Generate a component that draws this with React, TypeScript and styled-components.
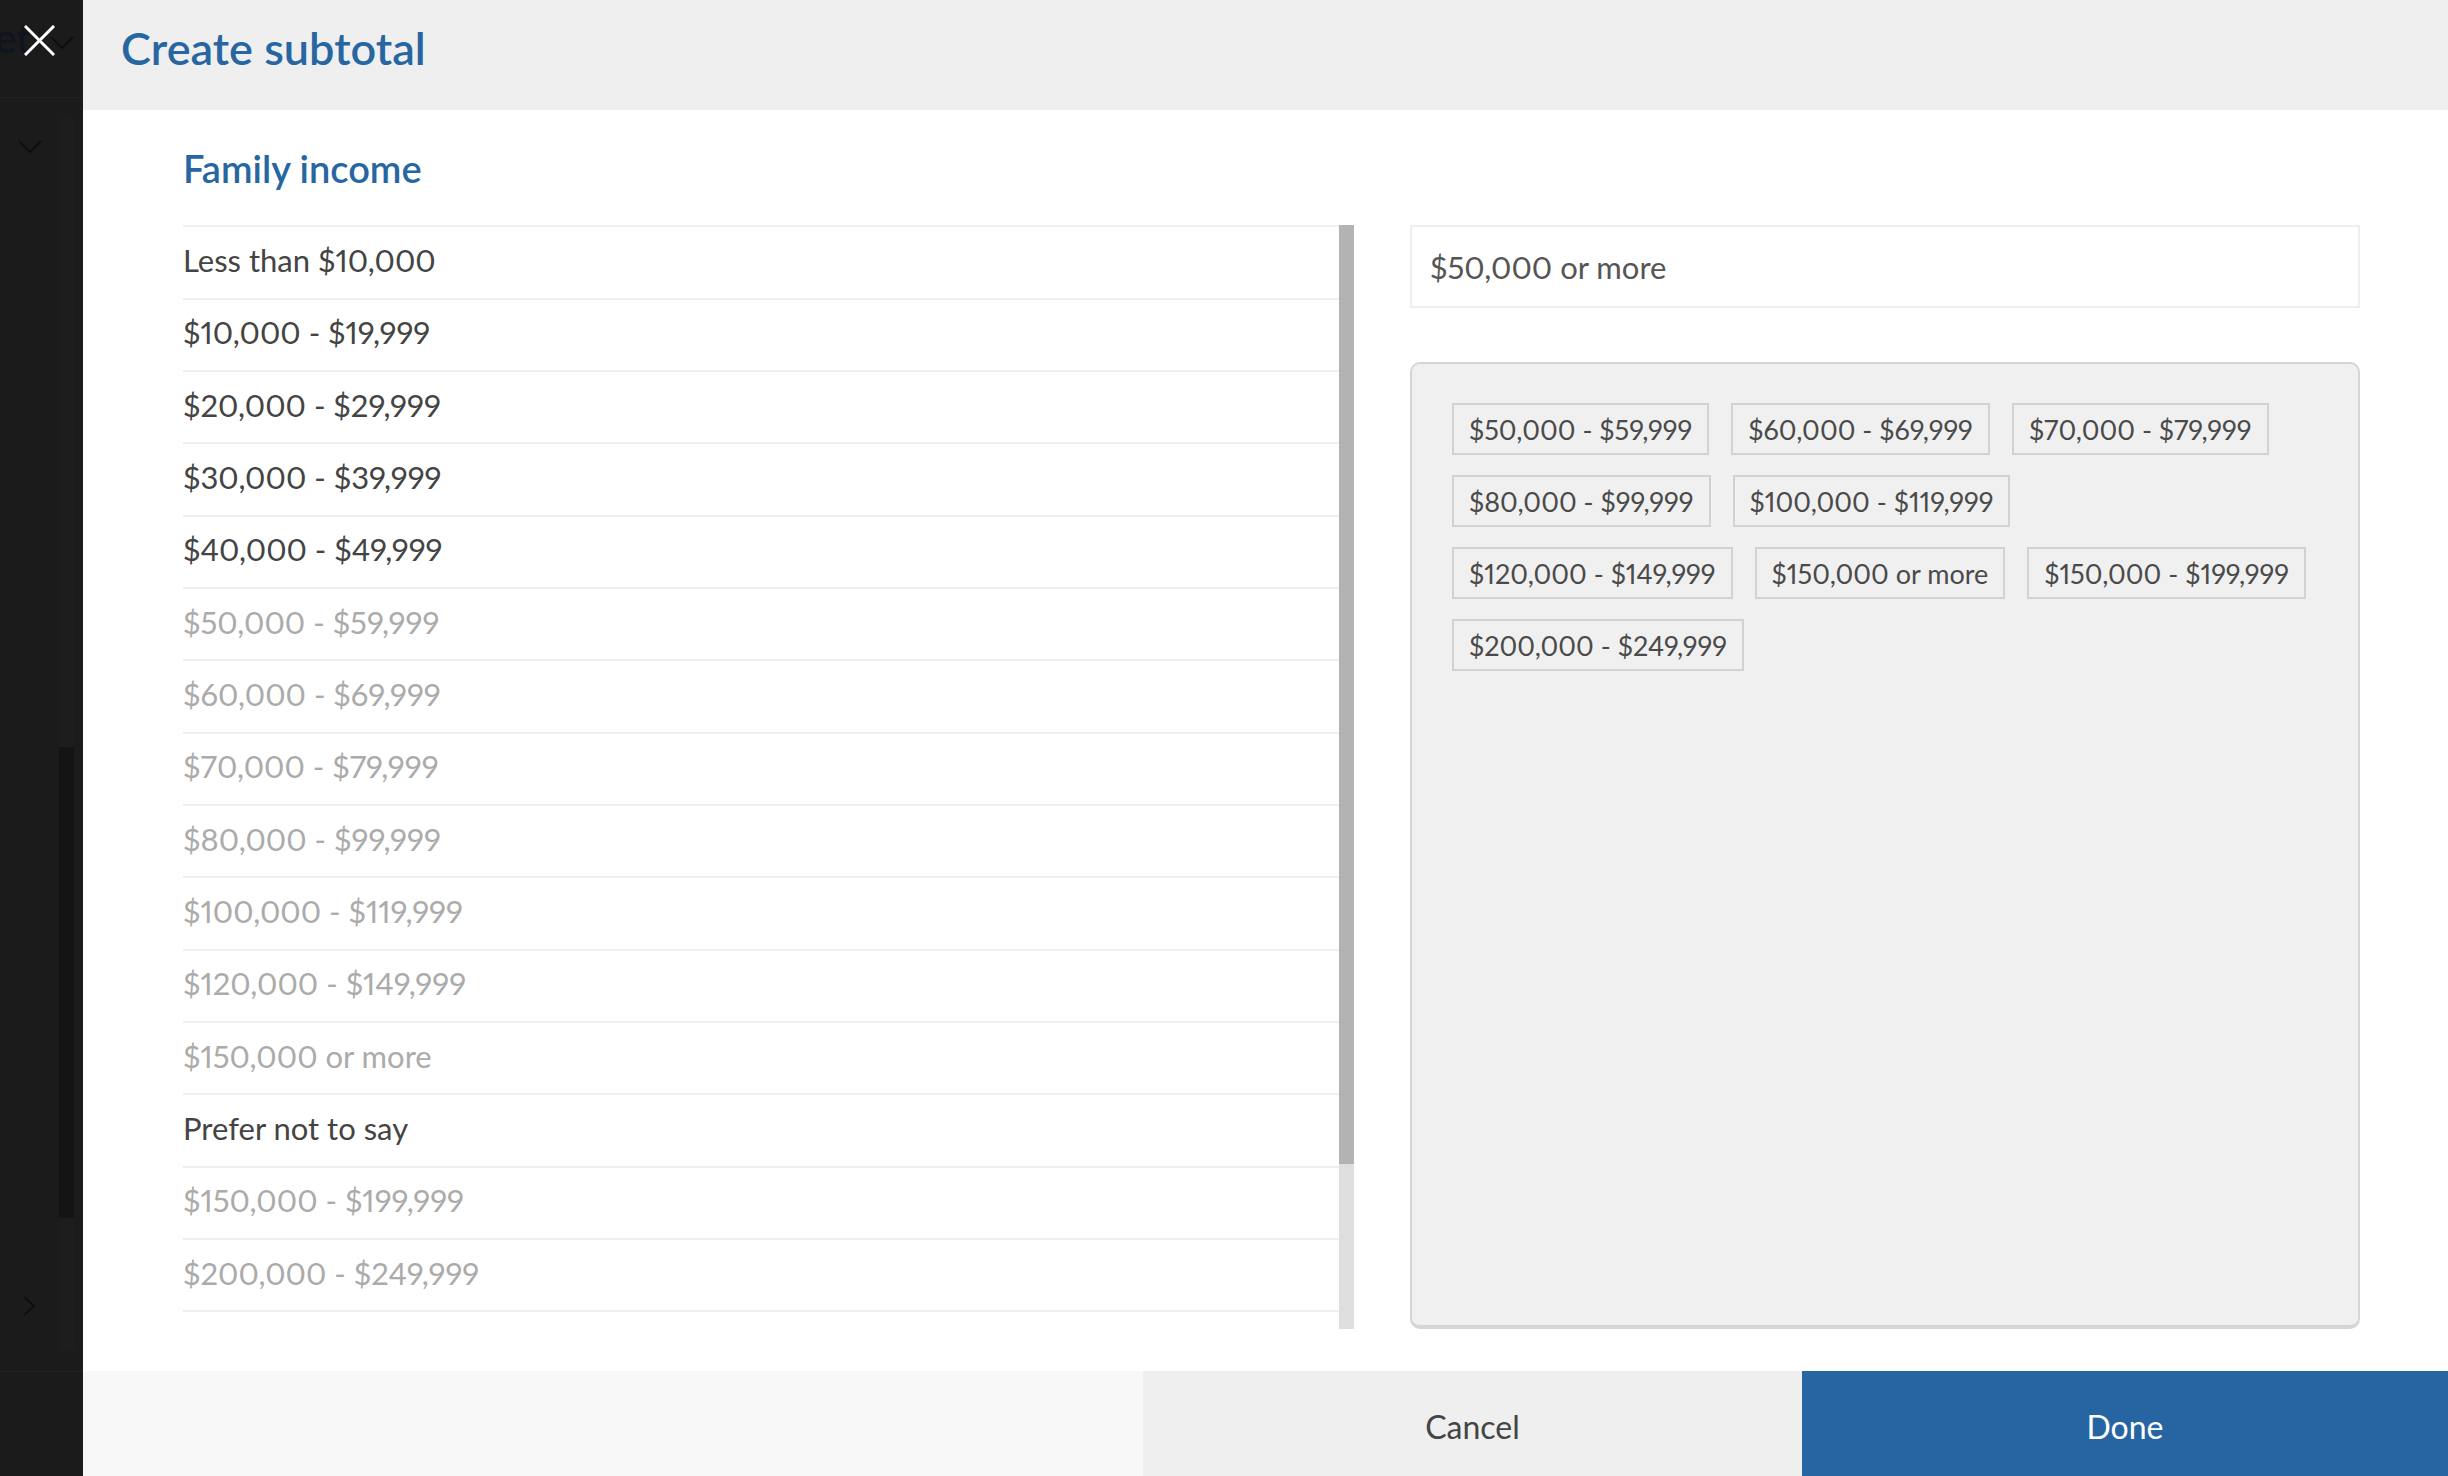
import React from 'react';
import styled, { createGlobalStyle } from 'styled-components';

const GlobalStyle = createGlobalStyle`
  html, body {
    margin: 0;
    padding: 0;
  }
  body {
    width: 2448px;
    height: 1476px;
    overflow: hidden;
    background: #fff;
    font-family: Lato, "Open Sans", "Liberation Sans", sans-serif;
    font-variant-numeric: proportional-nums;
  }
  * {
    box-sizing: border-box;
  }
`;

interface Option {
  label: string;
  muted?: boolean;
}

const OPTIONS: Option[] = [
  { label: 'Less than $10,000' },
  { label: '$10,000 - $19,999' },
  { label: '$20,000 - $29,999' },
  { label: '$30,000 - $39,999' },
  { label: '$40,000 - $49,999' },
  { label: '$50,000 - $59,999', muted: true },
  { label: '$60,000 - $69,999', muted: true },
  { label: '$70,000 - $79,999', muted: true },
  { label: '$80,000 - $99,999', muted: true },
  { label: '$100,000 - $119,999', muted: true },
  { label: '$120,000 - $149,999', muted: true },
  { label: '$150,000 or more', muted: true },
  { label: 'Prefer not to say' },
  { label: '$150,000 - $199,999', muted: true },
  { label: '$200,000 - $249,999', muted: true },
];

// chips of the subtotal, laid out in the rows the panel wraps them into
const SELECTED = OPTIONS.filter((o) => o.muted).map((o) => o.label);
const CHIP_ROWS = [SELECTED.slice(0, 3), SELECTED.slice(3, 5), SELECTED.slice(5, 8), SELECTED.slice(8)];

const BLUE = '#2866a2';

function CloseIcon() {
  return (
    <svg width="31" height="31" viewBox="0 0 31 31" fill="none">
      <path d="M2 2 L29 29 M29 2 L2 29" stroke="#fff" strokeWidth="3" strokeLinecap="square" />
    </svg>
  );
}

function Chevron({ dir }: { dir: 'down' | 'right' }) {
  return dir === 'down' ? (
    <svg width="24" height="14" viewBox="0 0 24 14" fill="none">
      <path d="M1 1 L12 12 L23 1" stroke="#0c0c0c" strokeWidth="1.6" />
    </svg>
  ) : (
    <svg width="12" height="20" viewBox="0 0 12 20" fill="none">
      <path d="M1 1 L11 10 L1 19" stroke="#0c0c0c" strokeWidth="1.6" />
    </svg>
  );
}

function App() {
  return (
    <>
      <GlobalStyle />
      <Screen>
        <Backdrop>
          <Ghost $top={18} $left={-5}>
            <GhostWord>et</GhostWord>
          </Ghost>
          <Ghost $top={36} $left={50}>
            <Chevron dir="down" />
          </Ghost>
          <GhostRule $top={97} />
          <Ghost $top={140} $left={18}>
            <Chevron dir="down" />
          </Ghost>
          <Ghost $top={404} $left={-12}>
            <GhostWord>)</GhostWord>
          </Ghost>
          <GhostTrack>
            <GhostThumb />
          </GhostTrack>
          <Ghost $top={1296} $left={23}>
            <Chevron dir="right" />
          </Ghost>
          <GhostRule $top={1371} />
          <CloseButton aria-label="Close">
            <CloseIcon />
          </CloseButton>
        </Backdrop>

        <Modal>
          <Header>
            <Title>Create subtotal</Title>
          </Header>

          <Body>
            <SectionTitle>Family income</SectionTitle>
            <Columns>
              <ListPane>
                <OptionList>
                  {OPTIONS.map((o) => (
                    <OptionRow key={o.label} $muted={o.muted}>
                      {o.label}
                    </OptionRow>
                  ))}
                </OptionList>
                <ScrollTrack>
                  <ScrollThumb $size={939} />
                </ScrollTrack>
              </ListPane>

              <FilterPane>
                <NameField>$50,000 or more</NameField>
                <ChipPanel>
                  {CHIP_ROWS.map((row, i) => (
                    <ChipRow key={i}>
                      {row.map((label) => (
                        <Chip key={label}>{label}</Chip>
                      ))}
                    </ChipRow>
                  ))}
                </ChipPanel>
              </FilterPane>
            </Columns>
          </Body>

          <Footer>
            <FooterButton>Cancel</FooterButton>
            <FooterButton $primary>Done</FooterButton>
          </Footer>
        </Modal>
      </Screen>
    </>
  );
}

const Screen = styled.div`
  display: flex;
  width: 2448px;
  height: 1476px;
`;

const Backdrop = styled.div`
  position: relative;
  flex: 0 0 83px;
  background: #1b1b1b;
  overflow: hidden;
`;

const Ghost = styled.div<{ $top: number; $left: number }>`
  position: absolute;
  top: ${({ $top }) => $top}px;
  left: ${({ $left }) => $left}px;
  line-height: 1;
`;

const GhostWord = styled.span`
  font-size: 40px;
  font-weight: 500;
  color: #0e1420;
`;

const GhostRule = styled.div<{ $top: number }>`
  position: absolute;
  top: ${({ $top }) => $top}px;
  left: 0;
  right: 0;
  height: 1px;
  background: #222;
`;

const GhostTrack = styled.div`
  position: absolute;
  top: 118px;
  left: 59px;
  width: 15px;
  height: 1232px;
  background: #1d1d1d;
  padding-top: 629px;
`;

const GhostThumb = styled.div`
  height: 471px;
  background: #141414;
`;

const CloseButton = styled.button`
  position: absolute;
  top: 25px;
  left: 24px;
  width: 31px;
  height: 31px;
  padding: 0;
  border: 0;
  background: transparent;
  display: flex;
  cursor: pointer;
`;

const Modal = styled.div`
  flex: 1;
  min-width: 0;
  display: flex;
  flex-direction: column;
  background: #fff;
`;

const Header = styled.header`
  flex: 0 0 110px;
  background: #efefef;
  padding: 21px 0 0 38px;
`;

const Title = styled.h1`
  margin: 0;
  font-size: 45px;
  font-weight: 600;
  line-height: 1.2;
  color: ${BLUE};
`;

const Body = styled.main`
  flex: 1;
  min-height: 0;
  display: flex;
  flex-direction: column;
  padding: 36px 88px 0 100px;
`;

const SectionTitle = styled.h2`
  margin: 0 0 35px;
  font-size: 38px;
  font-weight: 600;
  line-height: 1.17;
  color: ${BLUE};
`;

const Columns = styled.div`
  display: grid;
  grid-template-columns: 1fr 950px;
  column-gap: 56px;
  height: 1104px;
`;

const ListPane = styled.div`
  display: flex;
  min-height: 0;
  overflow: hidden;
`;

const OptionList = styled.ul`
  flex: 1;
  margin: 0;
  padding: 0;
  list-style: none;
  border-top: 2px solid #efefef;
  overflow: hidden;
`;

const OptionRow = styled.li<{ $muted?: boolean }>`
  height: 72.33px;
  display: flex;
  align-items: center;
  padding-bottom: 5px;
  border-bottom: 2px solid #efefef;
  font-size: 31px;
  color: ${({ $muted }) => ($muted ? '#ababab' : '#444')};
  white-space: nowrap;
`;

const ScrollTrack = styled.div`
  flex: 0 0 15px;
  background: #dedede;
`;

const ScrollThumb = styled.div<{ $size: number }>`
  height: ${({ $size }) => $size}px;
  background: #b3b3b3;
`;

const FilterPane = styled.div`
  display: flex;
  flex-direction: column;
  gap: 54px;
  min-height: 0;
`;

const NameField = styled.div`
  flex: 0 0 83px;
  display: flex;
  align-items: center;
  padding: 0 18px;
  border: 2px solid #eeeeee;
  font-size: 31px;
  color: #555;
`;

const ChipPanel = styled.div`
  flex: 1;
  display: flex;
  flex-direction: column;
  gap: 20px;
  padding: 39px 40px 0;
  background: #f0f0f0;
  border: 2px solid #d5d5d5;
  border-bottom-width: 4px;
  border-radius: 10px;
`;

const ChipRow = styled.div`
  display: flex;
  gap: 22px;
`;

const Chip = styled.span`
  height: 52px;
  display: inline-flex;
  align-items: center;
  padding: 0 15px;
  border: 2px solid #d2d2d2;
  background: #f0f0f0;
  font-size: 27px;
  color: #4a4a4a;
  white-space: nowrap;
`;

const Footer = styled.footer`
  flex: 0 0 105px;
  display: flex;
  justify-content: flex-end;
  background: #f8f8f8;
`;

const FooterButton = styled.button<{ $primary?: boolean }>`
  flex: 0 0 ${({ $primary }) => ($primary ? '646px' : '659px')};
  border: 0;
  padding: 6px 0 0;
  font-family: inherit;
  font-size: 32px;
  background: ${({ $primary }) => ($primary ? '#2765a2' : '#efefef')};
  color: ${({ $primary }) => ($primary ? '#fff' : '#444')};
  cursor: pointer;
`;

export default App;
